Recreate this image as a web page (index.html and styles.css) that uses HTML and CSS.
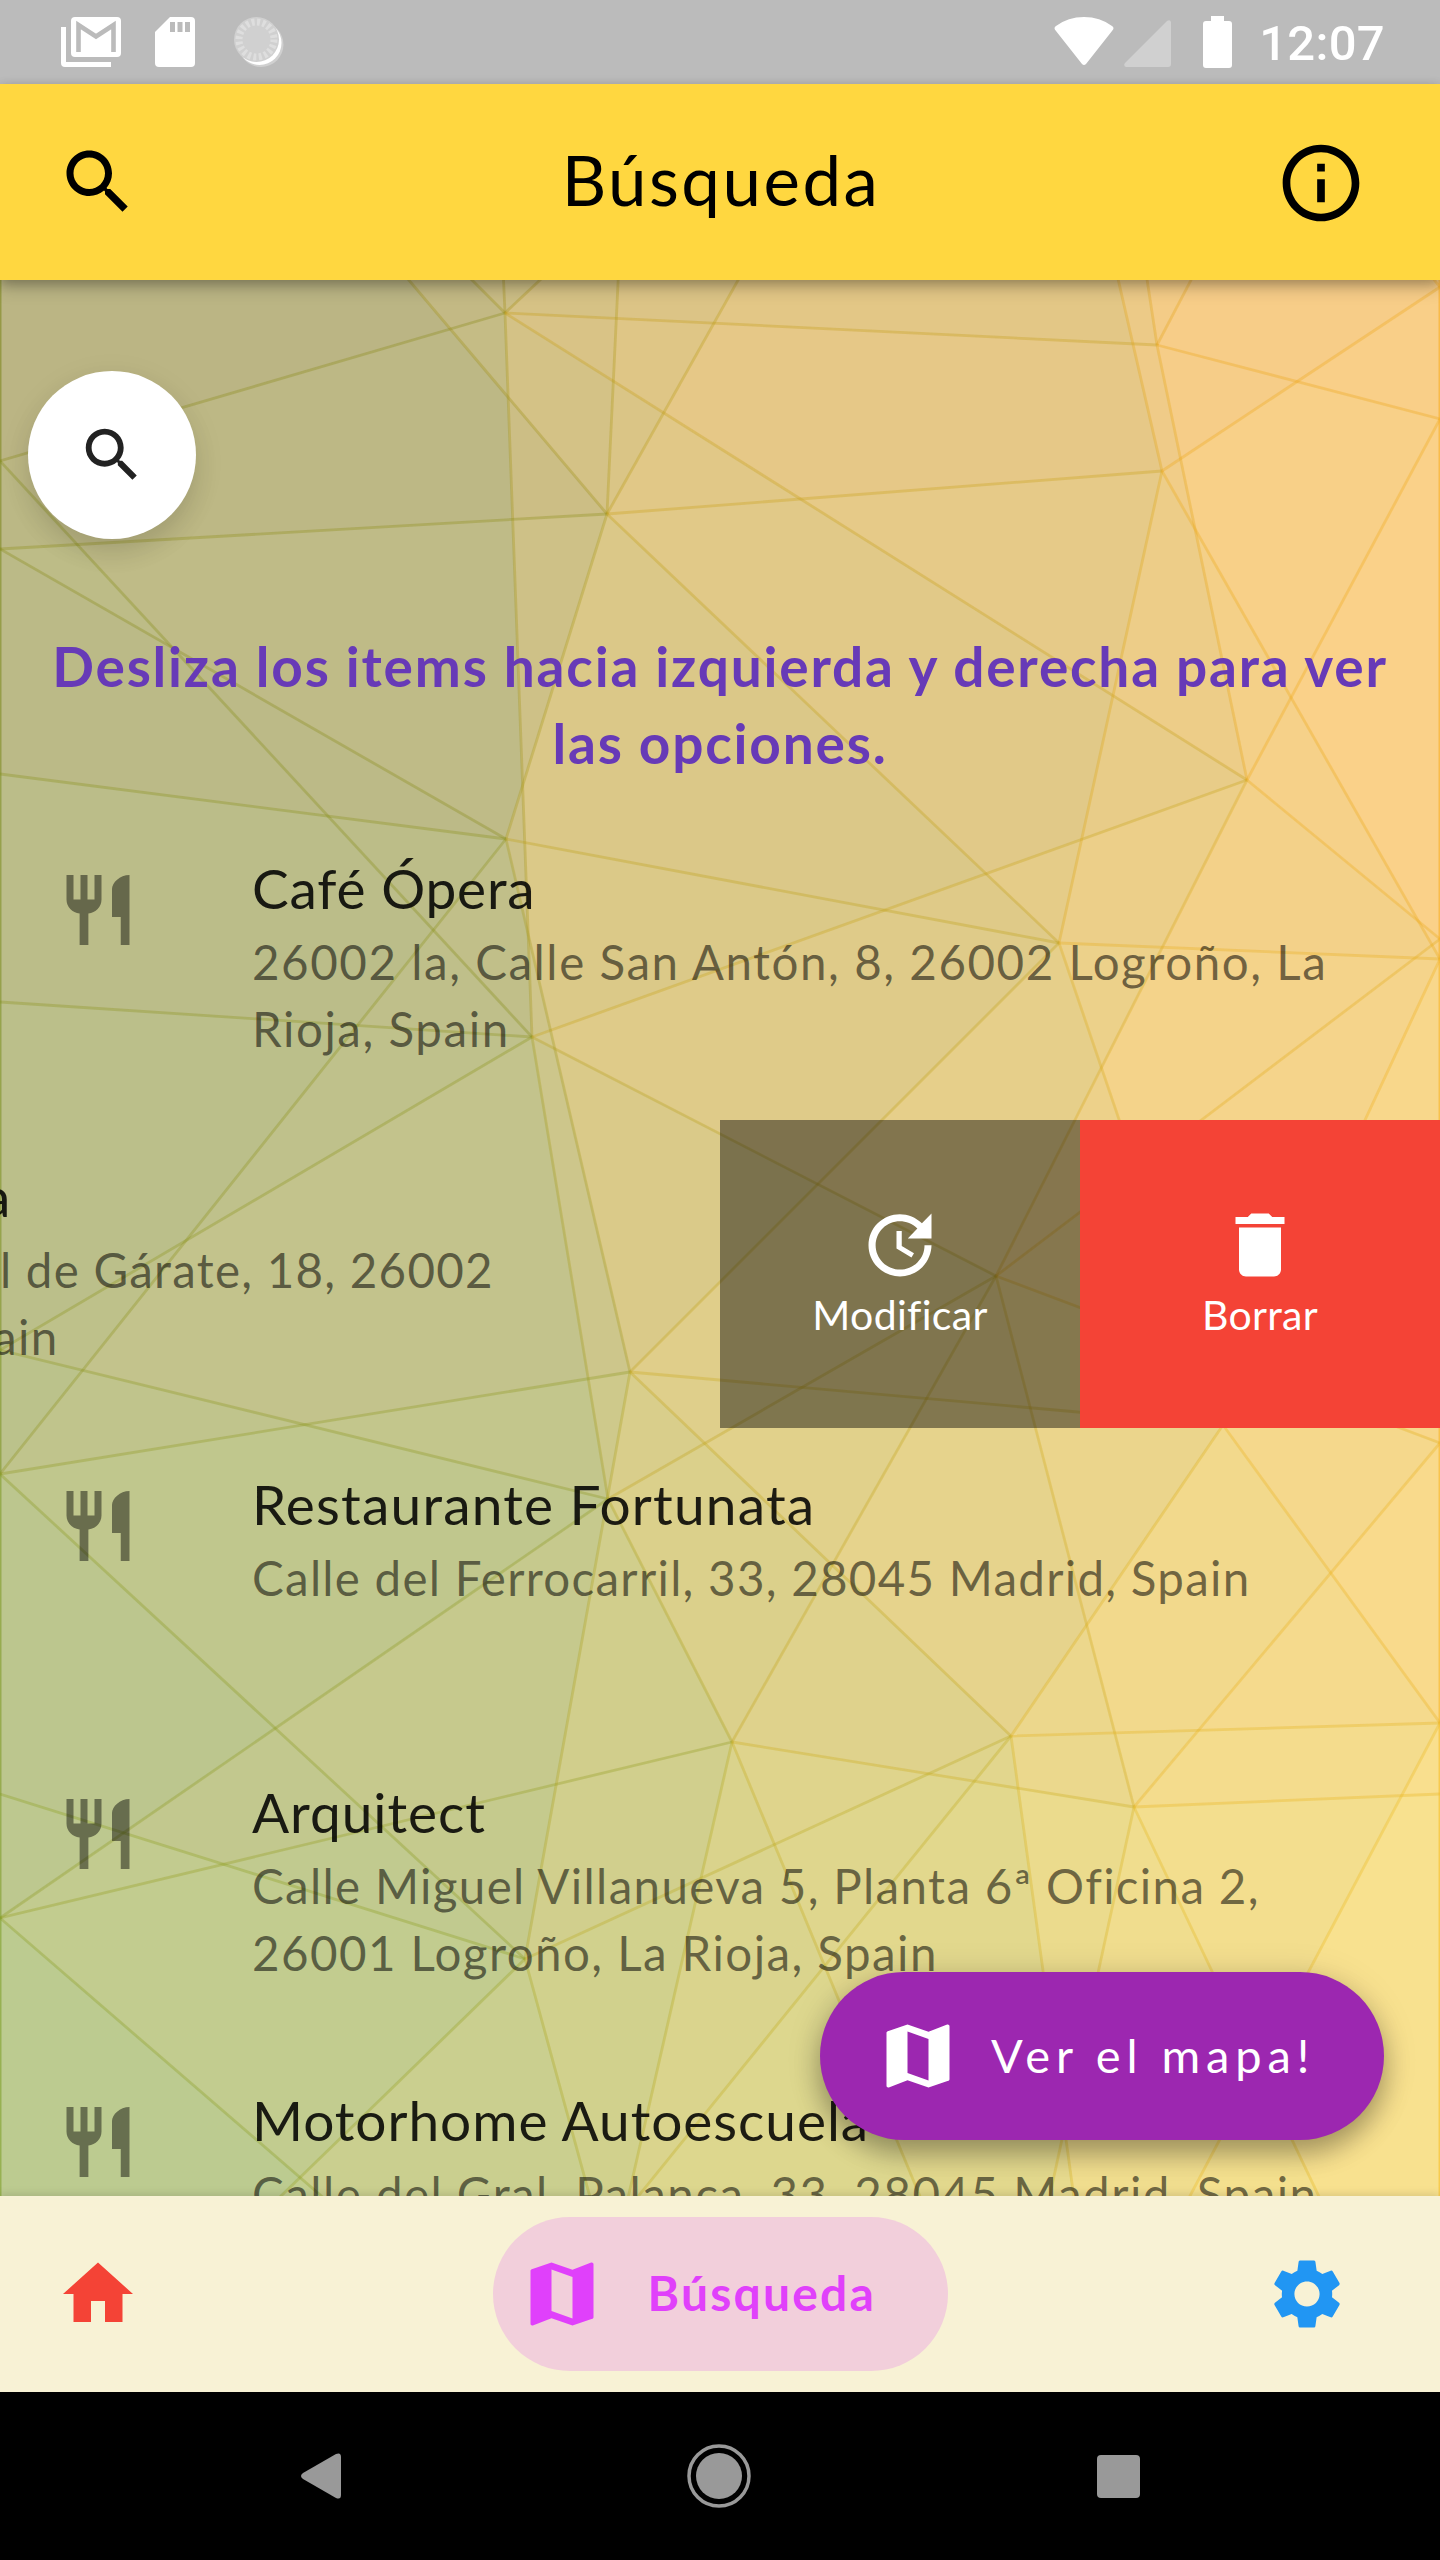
FILE: index.html
```html
<!DOCTYPE html>
<html lang="es">
<head>
<meta charset="utf-8">
<title>Búsqueda</title>
<link rel="stylesheet" href="styles.css">
</head>
<body>
<svg class="sprite" aria-hidden="true">
  <symbol id="search" viewBox="0 0 24 24"><path d="M15.5 14h-.79l-.28-.27C15.41 12.59 16 11.11 16 9.500 16 5.910 13.090 3 9.500 3S3 5.910 3 9.500 5.910 16 9.500 16c1.610 0 3.090-.59 4.230-1.570l.27.28v.79l5 4.990L20.490 19l-4.990-5zm-6 0C7.010 14 5 11.990 5 9.500S7.010 5 9.500 5 14 7.010 14 9.500 11.990 14 9.500 14z"/></symbol>
  <symbol id="info" viewBox="0 0 24 24"><path d="M11 7h2v2h-2zm0 4h2v6h-2zm1-9C6.480 2 2 6.480 2 12s4.480 10 10 10 10-4.480 10-10S17.520 2 12 2zm0 18c-4.410 0-8-3.590-8-8s3.590-8 8-8 8 3.590 8 8-3.590 8-8 8z"/></symbol>
  <symbol id="food" viewBox="0 0 24 24"><path d="M11 9H9V2H7v7H5V2H3v7c0 2.120 1.660 3.840 3.750 3.970V22h2.500v-9.030C11.340 12.840 13 11.120 13 9V2h-2v7zm5-3v8h2.500v8H21V2c-2.760 0-5 2.240-5 4z"/></symbol>
  <symbol id="update" viewBox="0 0 24 24"><path d="M21 10.120h-6.780l2.740-2.820c-2.730-2.700-7.150-2.800-9.880-.1-2.730 2.710-2.730 7.080 0 9.790 2.730 2.710 7.150 2.710 9.880 0C18.320 15.650 19 14.080 19 12.100h2c0 1.980-.88 4.550-2.640 6.290-3.510 3.480-9.210 3.480-12.720 0-3.500-3.470-3.530-9.110-.02-12.580 3.510-3.470 9.140-3.470 12.650 0L21 3v7.120zM12.500 8v4.250l3.500 2.080-.72 1.210L11 13V8h1.500z"/></symbol>
  <symbol id="delete" viewBox="0 0 24 24"><path d="M6 19c0 1.100.9 2 2 2h8c1.100 0 2-.9 2-2V7H6v12zM19 4h-3.500l-1-1h-5l-1 1H5v2h14V4z"/></symbol>
  <symbol id="map" viewBox="0 0 24 24"><path d="M20.500 3l-.16.030L15 5.100 9 3 3.360 4.900c-.21.070-.36.250-.36.480V20.500c0 .28.220.5.500.5l.16-.03L9 18.900l6 2.100 5.640-1.900c.21-.07.360-.25.360-.48V3.500c0-.28-.22-.5-.5-.5zM15 19l-6-2.110V5l6 2.110V19z"/></symbol>
  <symbol id="home" viewBox="0 0 24 24"><path d="M10 20v-6h4v6h5v-8h3L12 3 2 12h3v8z"/></symbol>
  <symbol id="settings" viewBox="0 0 24 24"><path d="M19.14 12.94c.04-.3.06-.61.06-.94 0-.32-.02-.64-.07-.94l2.030-1.580c.18-.14.23-.41.12-.61l-1.920-3.320c-.12-.22-.37-.29-.59-.22l-2.390.96c-.5-.38-1.030-.7-1.620-.94l-.36-2.540c-.04-.24-.24-.41-.48-.41h-3.840c-.24 0-.43.17-.47.41l-.36 2.540c-.59.24-1.130.57-1.620.94l-2.390-.96c-.22-.08-.47 0-.59.22L2.740 8.870c-.12.21-.08.47.12.61l2.030 1.580c-.05.3-.09.63-.09.94s.02.64.07.94l-2.030 1.580c-.18.14-.23.41-.12.61l1.920 3.320c.12.22.37.29.59.22l2.390-.96c.5.38 1.030.7 1.620.94l.36 2.540c.05.24.24.41.48.41h3.840c.24 0 .44-.17.47-.41l.36-2.540c.59-.24 1.130-.56 1.620-.94l2.390.96c.22.08.47 0 .59-.22l1.920-3.320c.12-.22.07-.47-.12-.61l-2.010-1.580zM12 15.600c-1.980 0-3.600-1.620-3.600-3.600s1.620-3.600 3.600-3.600 3.600 1.620 3.600 3.600-1.620 3.600-3.600 3.600z"/></symbol>
</svg>

<div class="phone">
  <header class="status">
    <div class="status-left">
      <svg width="60" height="50" viewBox="0 0 60 50"><path fill="#fff" d="M0 10h5v35h45v5H4q-4 0-4-4z"/><rect x="10" width="50" height="40" rx="4" fill="#fff"/><path fill="none" stroke="#bbb" stroke-width="4.600" d="M17.500 35V8L35 19.500 52.500 8V35"/></svg>
      <svg width="40" height="50" viewBox="0 0 40 50"><path fill="#fff" d="M15 0h21q4 0 4 4v42q0 4-4 4H4q-4 0-4-4V15z"/><path fill="#bbb" d="M15 5h5v10h-5zM22.500 5h5v10h-5zM30 5h5v10h-5z"/></svg>
      <svg width="50" height="50" viewBox="0 0 50 50"><circle cx="27" cy="27.500" r="22.500" fill="#d0d0d0"/><circle cx="25.500" cy="26" r="22" fill="#fff"/><circle cx="22.500" cy="22.500" r="22.500" fill="#d0d0d0"/><circle cx="22.500" cy="22.500" r="17.500" fill="none" stroke="#dedede" stroke-width="7" stroke-dasharray="3 2.500"/></svg>
    </div>
    <div class="status-right">
      <svg width="60" height="50" viewBox="0 0 60 50"><path fill="#fff" d="M2 14Q-1 11 2 9Q14 0 30 0T58 9Q61 11 58 14L32 47Q30 49 28 47z"/></svg>
      <svg class="signal" width="47" height="50" viewBox="0 0 47 50"><path fill="#d0d0d0" d="M47 5V47q0 3-3 3H2q-3-1-1-4L43 4q3-2 4 1z"/></svg>
      <svg class="battery" width="29" height="52" viewBox="0 0 29 52"><path fill="#fff" d="M8 0h13v5h5q3 0 3 3v41q0 3-3 3H3q-3 0-3-3V8q0-3 3-3h5z"/></svg>
      <span class="clock">12:07</span>
    </div>
  </header>

  <div class="appbar">
    <svg class="icon"><use href="#search"/></svg>
    <h1>Búsqueda</h1>
    <svg class="icon info"><use href="#info"/></svg>
  </div>

  <main class="content">
    <svg class="mesh" viewBox="0 280 1440 1916" aria-hidden="true"></svg>
    <div class="scroll">
      <button class="round"><svg><use href="#search"/></svg></button>
      <p class="hint">Desliza los items hacia izquierda y derecha para ver<br>las opciones.</p>
      <div class="row">
        <svg class="icon"><use href="#food"/></svg>
        <div class="text"><div class="name n1">Café Ópera</div><div class="addr a1">26002 la, Calle San Antón, 8, 26002 Logroño, La</div><div class="addr a2">Rioja, Spain</div></div>
      </div>
      <div class="row slid">
        <div class="text"><div class="name cut-a">a</div><div class="addr cut-l">l de Gárate, 18, 26002</div><div class="addr cut-s">ain</div></div>
        <div class="action edit"><svg class="icon"><use href="#update"/></svg><span>Modificar</span></div>
        <div class="action remove"><svg class="icon"><use href="#delete"/></svg><span>Borrar</span></div>
      </div>
      <div class="row">
        <svg class="icon"><use href="#food"/></svg>
        <div class="text"><div class="name n2">Restaurante Fortunata</div><div class="addr a3">Calle del Ferrocarril, 33, 28045 Madrid, Spain</div></div>
      </div>
      <div class="row">
        <svg class="icon"><use href="#food"/></svg>
        <div class="text"><div class="name n3">Arquitect</div><div class="addr a4">Calle Miguel Villanueva 5, Planta 6ª Oficina 2,</div><div class="addr a5">26001 Logroño, La Rioja, Spain</div></div>
      </div>
      <div class="row">
        <svg class="icon"><use href="#food"/></svg>
        <div class="text"><div class="name n4">Motorhome Autoescuela</div><div class="addr a6">Calle del Gral. Palanca, 33, 28045 Madrid, Spain</div></div>
      </div>
    </div>
    <button class="fab"><svg class="icon"><use href="#map"/></svg><span>Ver el mapa!</span></button>
  </main>

  <nav class="tabs">
    <svg class="icon home"><use href="#home"/></svg>
    <div class="pill"><svg class="icon"><use href="#map"/></svg><span>Búsqueda</span></div>
    <svg class="icon gear"><use href="#settings"/></svg>
  </nav>

  <footer class="system">
    <svg width="40" height="46" viewBox="0 0 40 46"><path fill="#999" d="M2 20L35 1Q40-1 40 4V42Q40 47 35 45L2 26Q-2 23 2 20z"/></svg>
    <svg width="64" height="64" viewBox="0 0 64 64"><circle cx="32" cy="32" r="30" fill="none" stroke="#999" stroke-width="3.500"/><circle cx="32" cy="32" r="23" fill="#999"/></svg>
    <svg width="43" height="43" viewBox="0 0 43 43"><rect width="43" height="43" rx="4" fill="#999"/></svg>
  </footer>
</div>
<script src="mesh.js"></script>
</body>
</html>
```
FILE: styles.css
```css
* { box-sizing: border-box; }
body { margin: 0; font-family: Lato, "Open Sans", sans-serif; color: #000; }
.sprite { display: none; }
svg { display: block; flex: none; }
button { border: 0; padding: 0; font: inherit; }
.icon { width: 84px; height: 84px; fill: currentColor; }

.phone { width: 1440px; height: 2560px; display: flex; flex-direction: column; overflow: hidden; background: #000; }

.status { height: 84px; flex: none; background: #bbb; display: flex; justify-content: space-between; padding: 0 55px 0 61px; }
.status-left, .status-right { display: flex; align-items: center; }
.status-left { gap: 34px; }
.status-left svg:last-child { margin-left: 5px; }
.signal { margin-left: 10px; }
.battery { margin-left: 32px; }
.clock { margin-left: 27px; font: 500 49px/84px Roboto, sans-serif; color: #fff; letter-spacing: .3px; padding-top: 4px; }

.appbar { height: 196px; flex: none; background: #ffd740; display: flex; align-items: center; justify-content: space-between; padding: 0 73px 0 56px; position: relative; z-index: 2; box-shadow: 0 8px 16px rgba(0,0,0,.2), 0 3px 10px rgba(0,0,0,.2); }
.appbar h1 { margin: 0 0 4px 27px; font-weight: 400; font-size: 69px; line-height: 84px; letter-spacing: 2.500px; }
.appbar .info { width: 92px; height: 92px; margin-top: 1px; }

.content { height: 1916px; flex: none; position: relative; overflow: hidden; }
.mesh { position: absolute; inset: 0; width: 1440px; height: 1916px; }
.scroll { position: relative; padding-top: 91px; }
.round { width: 168px; height: 168px; margin-left: 28px; border-radius: 50%; background: #fff; display: grid; place-items: center; box-shadow: 0 14px 24px rgba(0,0,0,.1), 0 8px 36px rgba(0,0,0,.06); }
.round svg { width: 70px; height: 70px; fill: #222; }
.hint { margin: 89px 0 0; height: 184px; text-align: center; font-weight: 700; font-size: 55px; line-height: 77px; letter-spacing: 1.800px; color: #673ab7; white-space: nowrap; }

.row { height: 308px; display: flex; padding: 56px 0 0 56px; color: rgba(0,0,0,.45); }
.row .text { margin-left: 112px; white-space: nowrap; }
.name { font-size: 55px; line-height: 72px; margin-top: -16px; color: rgba(0,0,0,.87); }
.addr { font-size: 47.500px; line-height: 67px; color: rgba(0,0,0,.54); }
.name + .addr { margin-top: 4px; }
.n1 { letter-spacing: .8px; }
.n2 { letter-spacing: 1.200px; }
.n3, .n4 { letter-spacing: .95px; }
.a1, .a2 { letter-spacing: 1.550px; }
.a3 { letter-spacing: 1.270px; }
.a4 { letter-spacing: 1.330px; }
.a5 { letter-spacing: 1.430px; }
.a6 { letter-spacing: 1.480px; }
.slid { padding: 0; }
.slid .text { width: 720px; margin: 0; padding-top: 56px; overflow: hidden; }
.cut-a { margin-left: -17px; }
.cut-l { letter-spacing: 1.250px; }
.cut-s { letter-spacing: 1.400px; margin-left: -7px; }
.action { width: 360px; display: flex; flex-direction: column; align-items: center; padding-top: 83px; color: #fff; }
.action span { font-size: 41px; line-height: 50px; margin-top: 3px; letter-spacing: .3px; }
.edit { background: rgba(0,0,0,.435); }
.remove { background: #f44336; }

.fab { position: absolute; right: 56px; bottom: 56px; width: 564px; height: 168px; border-radius: 84px; background: #9c27b0; color: #fff; display: flex; align-items: center; padding-left: 56px; box-shadow: 0 14px 26px rgba(0,0,0,.28), 0 4px 36px rgba(0,0,0,.13); }
.fab span { margin: 0 0 3px 31px; font-size: 47px; letter-spacing: 5.900px; white-space: nowrap; }

.tabs { height: 196px; flex: none; background: #f8f2d5; display: flex; align-items: center; justify-content: space-between; padding: 0 91px 0 56px; position: relative; box-shadow: 0 -2px 8px rgba(0,0,0,.12); }
.home { color: #f44336; }
.gear { color: #2196f3; }
.pill { width: 455px; height: 154px; border-radius: 77px; background: #f2cfdb; color: #e040fb; display: flex; align-items: center; padding-left: 27px; margin-left: 35px; }
.pill span { margin: 0 0 4px 44px; font-size: 48px; font-weight: 700; letter-spacing: 2.200px; }

.system { height: 168px; flex: none; background: #000; display: flex; align-items: center; justify-content: space-between; padding: 0 300px 0 301px; }
```
FILE: mesh.js
```js
// Low-poly backdrop: two triangulations blended together, with thin edges.
const P = {
  tl: [0, 200], tr: [1440, 200], bl: [0, 2264], br: [1440, 2264],
  C: [0, 461], A: [505, 313], G: [1157, 345], K: [1440, 419], H: [1247, 780],
  F: [532, 1037], M: [1440, 939], N: [996, 1276], T: [608, 1499], W: [0, 1350],
  a0: [0, 1002], R: [1440, 1443], Y: [0, 1918], O: [732, 1742], S: [1134, 1807],
  s1: [1440, 1794], t1: [392, 200], t2: [500, 200], t3: [625, 200], t4: [1135, 200],
  t5: [1233, 200], b1: [400, 2264], b2: [613, 2264], b3: [948, 2264], b4: [1035, 2264],
  b5: [1351, 2264],
  D: [0, 549], B: [607, 514], E: [506, 839], d0: [0, 774], I: [1162, 471],
  J: [1059, 943], L: [1440, 959], i1: [1440, 287], Q: [1011, 1736], V: [0, 1474],
  U: [630, 1372], X: [525, 1959], Z: [1440, 1723], Pp: [1223, 1425], x0: [0, 1794],
  u1: [341, 200], u2: [622, 200], u3: [783, 200], u4: [1100, 200], u5: [1370, 200],
  c1: [211, 2264], e: [602, 2241], c2: [602, 2264], c3: [1083, 2264], c4: [1154, 2264]
};
const layers = [
  `tl t1 A C|A t1 t2|A t2 t3|A t3 t4 G|G t4 t5|G t5 tr K|C A F|A H F|A G H|G K H|C F a0|
   a0 F W|K M H|H M N|F H N|F N T|W F T|N M R|N R S|N S O|T N O|T O Y|W T Y|R s1 S|
   Y b1 bl|Y O b2 b1|O b2 b3|O b3 b4 S|S b4 b5|S b5 br s1`,
  `tl u1 B D|B u1 u2|B u2 u3|B u3 u4 I|I u4 u5 i1|i1 u5 tr|D B E|D E d0|d0 E V|B I J|
   B J E|I i1 L|I L J|J L Pp|J Pp U|E J U|E U V|V U X|V X x0|U Q X|U Pp Q|Pp L Z|
   Pp Z Q|x0 X c1 bl|X e c2 c1|X Q e|Q c3 c2 e|Q Z c4 c3|Z br c4`
].map(s => s.split('|').map(f => f.trim().split(/\s+/)));

const xs = [0, 360, 720, 1080, 1440], ys = [280, 1240, 2200];
const grid = [
  [[182,178,131],[190,183,132],[220,197,134],[237,202,135],[255,208,136]],
  [[182,192,140],[194,195,140],[218,203,138],[236,211,139],[254,216,139]],
  [[182,204,146],[196,206,144],[218,215,142],[236,221,142],[253,230,144]]
];
function locate(v, ks) {
  v = Math.max(ks[0], Math.min(ks[ks.length - 1] - .01, v));
  let i = 0;
  while (v >= ks[i + 1]) i++;
  return [i, (v - ks[i]) / (ks[i + 1] - ks[i])];
}
function shade(x, y) {
  const [i, u] = locate(x, xs), [j, v] = locate(y, ys);
  return [0, 1, 2].map(k =>
    (grid[j][i][k] * (1 - u) + grid[j][i + 1][k] * u) * (1 - v) +
    (grid[j + 1][i][k] * (1 - u) + grid[j + 1][i + 1][k] * u) * v);
}
const rgb = c => `rgb(${c.map(v => Math.max(0, Math.round(v))).join(',')})`;

let fills = '', edges = '';
layers.forEach((faces, n) => {
  const seen = new Set();
  fills += `<g opacity="${n ? .5 : 1}">`;
  for (const f of faces) {
    const pts = f.map(k => P[k]);
    const cx = pts.reduce((s, p) => s + p[0], 0) / pts.length;
    const cy = pts.reduce((s, p) => s + p[1], 0) / pts.length;
    const c = rgb(shade(cx, cy));
    fills += `<polygon points="${pts.join(' ')}" fill="${c}" stroke="${c}" stroke-width="1"/>`;
    f.forEach((k, i) => {
      const m = f[(i + 1) % f.length], id = [k, m].sort().join();
      if (seen.has(id)) return;
      seen.add(id);
      const [a, b] = [P[k], P[m]];
      const mx = (a[0] + b[0]) / 2;
      const s = shade(mx, (a[1] + b[1]) / 2);
      const warm = mx / 1440;
      edges += `<line x1="${a[0]}" y1="${a[1]}" x2="${b[0]}" y2="${b[1]}" stroke="${rgb([s[0] - 60 + 54 * warm, s[1] - 46 + 8 * warm, s[2] - 110])}"/>`;
    });
  }
  fills += '</g>';
});
document.querySelector('.mesh').innerHTML = fills + `<g stroke-width="2.8" stroke-opacity=".34">${edges}</g>`;
```
